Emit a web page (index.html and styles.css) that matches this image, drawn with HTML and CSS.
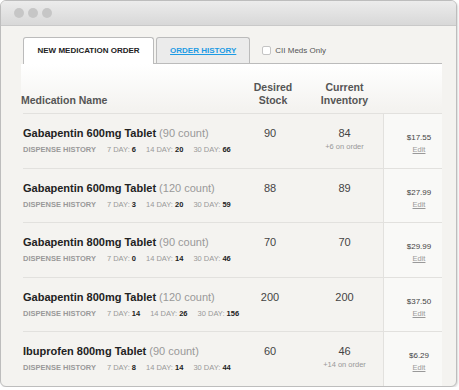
FILE: index.html
```html
<!DOCTYPE html>
<html lang="en">
<head>
  <meta charset="UTF-8" />
  <title>Medication Order</title>
  <link rel="stylesheet" href="styles.css">
</head>
<body>

  <div class="window">
    <div class="titlebar">
      <span class="dot"></span>
      <span class="dot"></span>
      <span class="dot"></span>
    </div>

    <div class="content">
      <div class="tabs">
        <div class="tab active">NEW MEDICATION ORDER</div>
        <div class="tab"><a href="#">ORDER HISTORY</a></div>
        <label class="filter"><span class="check"></span>CII Meds Only</label>
      </div>

      <div class="panel">
        <div class="row head">
          <div class="cell name">Medication Name</div>
          <div class="cell num desired">Desired<br>Stock</div>
          <div class="cell num">Current<br>Inventory</div>
          <div class="cell"></div>
        </div>

        <div class="row">
          <div class="cell name">
            <div class="med">Gabapentin 600mg Tablet <span class="count">(90 count)</span></div>
            <div class="history">
              <span class="label">DISPENSE HISTORY</span>
              <span>7 DAY: <b>6</b></span>
              <span>14 DAY: <b>20</b></span>
              <span>30 DAY: <b>66</b></span>
            </div>
          </div>
          <div class="cell num"><div class="qty">90</div></div>
          <div class="cell num"><div class="qty">84</div><div class="note">+6 on order</div></div>
          <div class="cell price"><div class="amount">$17.55</div><a href="#" class="edit">Edit</a></div>
        </div>

        <div class="row">
          <div class="cell name">
            <div class="med">Gabapentin 600mg Tablet <span class="count">(120 count)</span></div>
            <div class="history">
              <span class="label">DISPENSE HISTORY</span>
              <span>7 DAY: <b>3</b></span>
              <span>14 DAY: <b>20</b></span>
              <span>30 DAY: <b>59</b></span>
            </div>
          </div>
          <div class="cell num"><div class="qty">88</div></div>
          <div class="cell num"><div class="qty">89</div></div>
          <div class="cell price"><div class="amount">$27.99</div><a href="#" class="edit">Edit</a></div>
        </div>

        <div class="row">
          <div class="cell name">
            <div class="med">Gabapentin 800mg Tablet <span class="count">(90 count)</span></div>
            <div class="history">
              <span class="label">DISPENSE HISTORY</span>
              <span>7 DAY: <b>0</b></span>
              <span>14 DAY: <b>14</b></span>
              <span>30 DAY: <b>46</b></span>
            </div>
          </div>
          <div class="cell num"><div class="qty">70</div></div>
          <div class="cell num"><div class="qty">70</div></div>
          <div class="cell price"><div class="amount">$29.99</div><a href="#" class="edit">Edit</a></div>
        </div>

        <div class="row">
          <div class="cell name">
            <div class="med">Gabapentin 800mg Tablet <span class="count">(120 count)</span></div>
            <div class="history">
              <span class="label">DISPENSE HISTORY</span>
              <span>7 DAY: <b>14</b></span>
              <span>14 DAY: <b>26</b></span>
              <span>30 DAY: <b>156</b></span>
            </div>
          </div>
          <div class="cell num"><div class="qty">200</div></div>
          <div class="cell num"><div class="qty">200</div></div>
          <div class="cell price"><div class="amount">$37.50</div><a href="#" class="edit">Edit</a></div>
        </div>

        <div class="row">
          <div class="cell name">
            <div class="med">Ibuprofen 800mg Tablet <span class="count">(90 count)</span></div>
            <div class="history">
              <span class="label">DISPENSE HISTORY</span>
              <span>7 DAY: <b>8</b></span>
              <span>14 DAY: <b>14</b></span>
              <span>30 DAY: <b>44</b></span>
            </div>
          </div>
          <div class="cell num"><div class="qty">60</div></div>
          <div class="cell num"><div class="qty">46</div><div class="note">+14 on order</div></div>
          <div class="cell price"><div class="amount">$6.29</div><a href="#" class="edit">Edit</a></div>
        </div>
      </div>
    </div>
  </div>

</body>
</html>
```

FILE: styles.css
```css
body {
  margin: 0;
  background: #fff;
  font-family: "Liberation Sans", Arial, sans-serif;
}

.window {
  width: 455px;
  height: 385px;
  border: 1px solid #bdbdbd;
  border-radius: 6px;
  background: #f4f3f0;
  box-shadow: 1px 1px 2px rgba(0, 0, 0, 0.15);
  overflow: hidden;
}

.titlebar {
  height: 24px;
  border-bottom: 1px solid #c9c9c9;
  background: linear-gradient(#ececec, #d8d8d8);
  display: flex;
  align-items: center;
  gap: 4px;
  padding-left: 13px;
}

.dot {
  width: 10px;
  height: 10px;
  border-radius: 50%;
  background: #c6c6c6;
}

.content {
  padding: 11px 14px 0 20px;
}

/* tabs */
.tabs {
  display: flex;
  align-items: flex-end;
  height: 26px;
  margin-left: 2px;
  border-bottom: 1px solid #bbb;
}

.tab {
  height: 25px;
  border: 1px solid #bbb;
  border-bottom: none;
  border-radius: 3px 3px 0 0;
  background: #ebebeb;
  font-size: 8px;
  font-weight: bold;
  line-height: 25px;
  padding: 0 13px;
  margin-right: 2px;
  color: #222;
  white-space: nowrap;
}

.tab.active {
  height: 26px;
  margin-bottom: -1px;
  background: #fff;
  padding: 0 13.5px;
}

.tab a {
  color: #1d9be4;
}

.filter {
  align-self: center;
  display: flex;
  align-items: center;
  margin-left: 10px;
  font-size: 8px;
  color: #555;
}

.check {
  width: 7px;
  height: 7px;
  border: 1px solid #c4c4c4;
  border-radius: 2px;
  background: #fff;
  margin-right: 4px;
}

/* table */
.panel {
  padding-left: 2px;
  background: linear-gradient(#fff, #f4f3f0 45px);
}

.row {
  display: grid;
  grid-template-columns: 211px 72px 77px 59px;
  min-height: 53.5px;
  border-bottom: 1px solid #e2e1de;
}

.row:last-child {
  border-bottom: none;
}

.row.head {
  min-height: 49px;
  font-size: 10.5px;
  font-weight: bold;
  line-height: 13px;
  color: #555;
}

.row.head .cell {
  align-self: end;
  padding: 0 0 6px;
}

.row.head .name {
  margin-left: -2px;
}

.row.head .desired {
  padding-left: 6px;
}

.cell {
  padding-top: 12px;
}

.num {
  text-align: center;
}

.med {
  font-size: 11px;
  font-weight: bold;
  line-height: 15px;
  color: #222;
  white-space: nowrap;
}

.count {
  font-weight: normal;
  color: #999;
}

.history {
  display: flex;
  gap: 10px;
  margin-top: 4px;
  font-size: 7.5px;
  line-height: 10px;
  color: #999;
  white-space: nowrap;
}

.history b {
  color: #222;
}

.history .label {
  font-weight: bold;
  margin-right: 1px;
}

.qty {
  font-size: 11px;
  line-height: 15px;
  color: #444;
}

.note {
  margin-top: 1px;
  font-size: 7.5px;
  line-height: 10px;
  color: #999;
}

.price {
  padding: 18px 0 0 12px;
  border-left: 1px solid #e2e1de;
  background: #f9f9f7;
  text-align: center;
  font-size: 8px;
  line-height: 12px;
}

.row.head .cell:last-child {
  border-left: none;
  background: none;
}

.amount {
  font-size: 8px;
  line-height: 12px;
  color: #444;
}

.edit {
  font-size: 7.5px;
  line-height: 12px;
  color: #999;
}
```
